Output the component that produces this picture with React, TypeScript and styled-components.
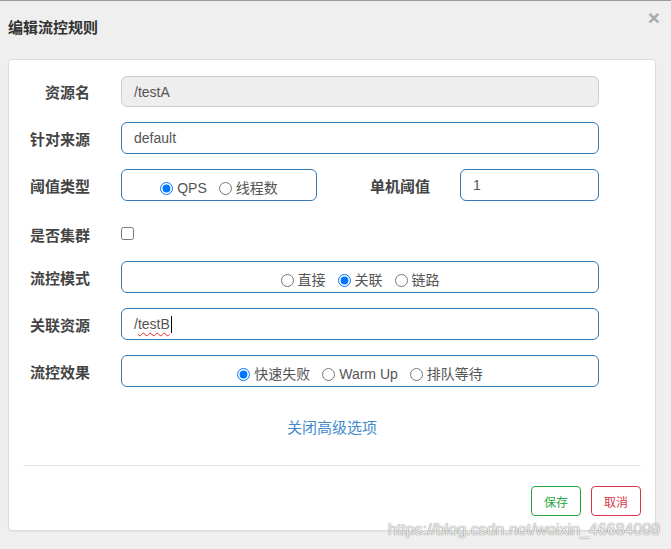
import React from "react";
import styled, { createGlobalStyle, css } from "styled-components";

const FONT = `"Liberation Sans", "Noto Sans CJK SC", sans-serif`;

const GlobalStyle = createGlobalStyle`
  html, body { margin: 0; padding: 0; background: #efefef; }
  body { font-family: ${FONT}; }
  * { box-sizing: border-box; }
`;

const Modal = styled.div`
  position: relative;
  width: 671px;
  height: 549px;
  background: #efefef;
  border-top: 1px solid #9a9a9a;
  overflow: hidden;
`;

const Header = styled.div`
  display: flex;
  justify-content: space-between;
  align-items: flex-start;
  height: 58px;
  padding: 7px 11px 0 8px;
`;

const Title = styled.h4`
  margin: 9px 0 0;
  font-size: 15px;
  line-height: 21px;
  font-weight: bold;
  color: #333;
`;

const Close = styled.button`
  margin: -1px 0 0;
  padding: 0;
  border: 0;
  background: none;
  font: bold 21px/1 "Liberation Sans", sans-serif;
  color: #aaa;
  cursor: pointer;
`;

const Card = styled.div`
  margin: 0 15px 0 8px;
  height: 472px;
  background: #fff;
  border: 1px solid #ddd;
  border-radius: 4px;
  box-shadow: 0 1px 1px rgba(0, 0, 0, 0.05);
  padding: 16px 14px 14px;
  display: flex;
  flex-direction: column;
`;

const Form = styled.div`
  display: flex;
  flex-direction: column;
  gap: 15px;
  padding-right: 42px;
`;

const Row = styled.div<{ $h?: number; $pt?: number }>`
  display: grid;
  grid-template-columns: 67px 1fr;
  column-gap: 31px;
  align-items: center;
  height: ${(p) => p.$h ?? 32}px;
  padding-top: ${(p) => p.$pt ?? 0}px;
`;

const Label = styled.label`
  text-align: right;
  font-size: 15px;
  font-weight: bold;
  color: #444;
  line-height: 21px;
  padding-top: 2px;
  white-space: nowrap;
`;

const SideLabel = styled(Label)`
  width: 113px;
  margin-right: 30px;
  flex: none;
`;

const fieldBox = css`
  height: 100%;
  border: 1px solid #337ab7;
  border-radius: 6px;
  background: #fff;
`;

const TextInput = styled.input`
  ${fieldBox};
  width: 100%;
  min-width: 0;
  padding: 0 12px;
  font-family: ${FONT};
  font-size: 14px;
  color: #555;
  outline: none;
  &:disabled {
    background: #eee;
    border-color: #ccc;
    color: #555;
  }
`;

const FakeInput = styled.div`
  ${fieldBox};
  display: flex;
  align-items: center;
  padding: 0 12px;
  font-size: 14px;
  color: #555;
`;

const Misspelled = styled.span`
  text-decoration: underline wavy #e22;
  text-decoration-skip-ink: none;
  text-underline-offset: 3px;
  text-decoration-thickness: 1px;
`;

const Caret = styled.span`
  display: inline-block;
  width: 1px;
  height: 17px;
  margin-left: 1px;
  background: #000;
`;

const SplitField = styled.div`
  display: flex;
  align-items: center;
  height: 100%;
`;

const RadioBox = styled.div<{ $width?: number }>`
  ${fieldBox};
  width: ${(p) => (p.$width ? `${p.$width}px` : "100%")};
  flex: none;
  display: flex;
  justify-content: center;
  align-items: center;
  gap: 12px;
  padding-top: 6px;
`;

const Option = styled.label`
  display: inline-flex;
  align-items: center;
  gap: 4px;
  font-size: 14px;
  line-height: 20px;
  color: #555;
`;

const Radio = styled.input.attrs({ type: "radio" })`
  margin: 0;
  width: 13px;
  height: 13px;
`;

const Checkbox = styled.input.attrs({ type: "checkbox" })`
  margin: 0;
  width: 13px;
  height: 13px;
`;

const ToggleLink = styled.a`
  align-self: center;
  margin-top: 30px;
  font-size: 15px;
  line-height: 21px;
  color: #428bca;
  text-decoration: none;
  cursor: pointer;
`;

const Divider = styled.hr`
  margin: 27px 0 0;
  border: 0;
  border-top: 1px solid #e5e5e5;
`;

const Footer = styled.div`
  display: flex;
  justify-content: flex-end;
  gap: 10px;
  margin-top: 20px;
`;

const Button = styled.button<{ $color: string }>`
  width: 50px;
  height: 30px;
  padding: 0;
  background: #fff;
  border: 1px solid ${(p) => p.$color};
  border-radius: 4px;
  color: ${(p) => p.$color};
  font-family: ${FONT};
  font-size: 12px;
  cursor: pointer;
`;

const Watermark = styled.div`
  position: absolute;
  left: 388px;
  top: 520px;
  font: 16px/18px "Liberation Sans", sans-serif;
  color: rgba(255, 255, 255, 0.9);
  text-shadow: 0 0 1px rgba(0, 0, 0, 0.5), 0 0 1px rgba(0, 0, 0, 0.3);
  white-space: nowrap;
  pointer-events: none;
`;

type Opt = { label: string; checked?: boolean };

const RadioGroup: React.FC<{ name: string; options: Opt[]; width?: number }> = ({
  name,
  options,
  width,
}) => (
  <RadioBox $width={width}>
    {options.map((o) => (
      <Option key={o.label}>
        <Radio name={name} defaultChecked={!!o.checked} />
        {o.label}
      </Option>
    ))}
  </RadioBox>
);

export default function App() {
  return (
    <>
      <GlobalStyle />
      <Modal>
        <Header>
          <Title>编辑流控规则</Title>
          <Close aria-label="关闭">×</Close>
        </Header>
        <Card>
          <Form>
            <Row $h={31}>
              <Label>资源名</Label>
              <TextInput disabled defaultValue="/testA" />
            </Row>
            <Row>
              <Label>针对来源</Label>
              <TextInput defaultValue="default" />
            </Row>
            <Row>
              <Label>阈值类型</Label>
              <SplitField>
                <RadioGroup
                  name="grade"
                  width={196}
                  options={[{ label: "QPS", checked: true }, { label: "线程数" }]}
                />
                <SideLabel>单机阈值</SideLabel>
                <TextInput defaultValue="1" />
              </SplitField>
            </Row>
            <Row $h={30} $pt={7}>
              <Label>是否集群</Label>
              <div>
                <Checkbox />
              </div>
            </Row>
            <Row>
              <Label>流控模式</Label>
              <RadioGroup
                name="strategy"
                options={[{ label: "直接" }, { label: "关联", checked: true }, { label: "链路" }]}
              />
            </Row>
            <Row>
              <Label>关联资源</Label>
              <FakeInput>
                /<Misspelled>testB</Misspelled>
                <Caret />
              </FakeInput>
            </Row>
            <Row>
              <Label>流控效果</Label>
              <RadioGroup
                name="behavior"
                options={[
                  { label: "快速失败", checked: true },
                  { label: "Warm Up" },
                  { label: "排队等待" },
                ]}
              />
            </Row>
          </Form>
          <ToggleLink>关闭高级选项</ToggleLink>
          <Divider />
          <Footer>
            <Button $color="#28a745">保存</Button>
            <Button $color="#dc3545">取消</Button>
          </Footer>
        </Card>
        <Watermark>https://blog.csdn.net/weixin_46684099</Watermark>
      </Modal>
    </>
  );
}
